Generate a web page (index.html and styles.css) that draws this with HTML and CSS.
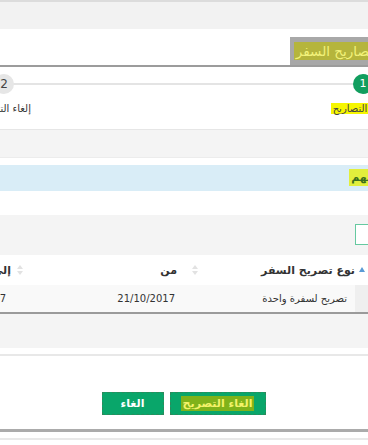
FILE: index.html
```html
<!DOCTYPE html>
<html lang="ar" dir="rtl">
<head>
  <meta charset="UTF-8" />
  <meta name="viewport" content="width=device-width, initial-scale=1.0"/>
  <title>إلغاء تصاريح السفر</title>
  <link rel="stylesheet" href="styles.css">
</head>
<body>

  <div class="page">
    <div class="topbar"></div>

    <div class="heading">
      <h1 class="heading-title"><mark class="hl-dark">إلغاء تصاريح السفر</mark></h1>
    </div>

    <div class="steps">
      <div class="step active">
        <span class="step-num">1</span>
        <span class="step-label"><mark class="hl-bright">اختيار التصاريح</mark></span>
      </div>
      <div class="step">
        <span class="step-num">2</span>
        <span class="step-label">إلغاء التصريح</span>
      </div>
    </div>

    <div class="band"></div>

    <div class="notice"><mark class="hl-notice">تنبيه مهم</mark></div>

    <div class="filter">
      <input class="filter-input" type="text" />
    </div>

    <table class="grid">
      <colgroup>
        <col class="w-a">
        <col class="w-b">
        <col class="w-c">
        <col>
      </colgroup>
      <thead>
        <tr>
          <th class="col-a"><span class="sort-up"></span></th>
          <th class="col-b">نوع تصريح السفر</th>
          <th class="col-c">
            <svg class="sort" width="6" height="10" viewBox="0 0 6 10"><path d="M3 0 6 4H0zM3 10 0 6h6z" fill="#e2e2e2"/></svg>من
          </th>
          <th class="col-d">
            <svg class="sort" width="6" height="10" viewBox="0 0 6 10"><path d="M3 0 6 4H0zM3 10 0 6h6z" fill="#e2e2e2"/></svg>إلى
          </th>
        </tr>
      </thead>
      <tbody>
        <tr>
          <td class="col-a"></td>
          <td class="col-b">تصريح لسفرة واحدة</td>
          <td class="col-c">21/10/2017</td>
          <td class="col-d">21/11/2017</td>
        </tr>
      </tbody>
    </table>

    <div class="band band-low"></div>

    <div class="actions">
      <button class="btn" type="button"><mark class="hl-btn">الغاء التصريح</mark></button>
      <button class="btn btn-small" type="button">الغاء</button>
    </div>

    <div class="bottom-line"></div>
  </div>

</body>
</html>
```

FILE: styles.css
```css
* {
  margin: 0;
  padding: 0;
  box-sizing: border-box;
}

html, body {
  height: 100%;
  overflow: hidden;
  background: #fff;
  font-family: Tahoma, "DejaVu Sans", sans-serif;
  font-size: 11px;
  color: #333;
}

/* the screenshot is a crop of a wider page */
.page {
  margin: 0 -40px 0 -41px;
}

.topbar {
  height: 29px;
  background: #f2f2f2;
  border-top: 2px solid #dcdcdc;
}

.heading {
  padding-top: 8px;
  border-bottom: 2px solid #9c9c9c;
}

.heading-title {
  display: inline-block;
  height: 28px;
  padding: 4px 4px 0;
  background: #a8a8a8;
  font-size: 13.5px;
  font-weight: normal;
  line-height: 20px;
}

mark {
  color: inherit;
  background: none;
}

.hl-dark {
  background: #b5b53c;
  color: #f2f27a;
  padding: 1px 2px;
}

.steps {
  display: flex;
  justify-content: space-between;
  height: 63px;
  padding-top: 7px;
  border-bottom: 1px solid #e6e6e6;
  background: linear-gradient(#e4e4e4, #e4e4e4) no-repeat 0 16px / 100% 2px;
}

.step {
  width: 90px;
  display: flex;
  flex-direction: column;
  align-items: center;
}

.step-num {
  width: 20px;
  height: 20px;
  border-radius: 50%;
  background: #e6e6e6;
  color: #444;
  font-size: 12px;
  line-height: 20px;
  text-align: center;
}

.step.active .step-num {
  background: #129e5f;
  color: #fff;
  font-size: 11px;
}

.step-label {
  margin-top: 8px;
  font-size: 10px;
  line-height: 13px;
  white-space: nowrap;
}

.hl-bright {
  background: #f6f600;
  color: #444;
  padding: 0 2px;
}

.band {
  height: 28px;
  background: #f4f4f4;
  border-bottom: 1px solid #ececec;
}

.notice {
  margin: 7px 0 24px;
  height: 26px;
  padding-right: 4px;
  background: #d9edf7;
  font-weight: bold;
  line-height: 26px;
}

.hl-notice {
  background: #e2ef3c;
  color: #3b6e1c;
  padding: 2px 2px;
}

.filter {
  height: 40px;
  padding: 9px 13px 0;
  background: #f4f4f4;
}

.filter-input {
  display: block;
  width: 40px;
  height: 21px;
  border: 1px solid #66c9a0;
  background: #fff;
}

.grid {
  width: 100%;
  table-layout: fixed;
  border-collapse: collapse;
  border-bottom: 2px solid #9a9a9a;
}

.w-a { width: 53px; }
.w-b { width: 150px; }
.w-c { width: 175px; }

.grid th,
.grid td {
  text-align: right;
  white-space: nowrap;
  overflow: hidden;
}

.grid th {
  height: 30px;
  font-size: 11px;
  font-weight: bold;
  color: #333;
  background: #fff;
}

.grid td {
  height: 28px;
  background: #f9f9f9;
  font-size: 10px;
}

.grid .col-a {
  text-align: left;
  padding-left: 4px;
}

.grid td.col-a {
  background: #efefef;
}

.grid td.col-b {
  padding-right: 8px;
}

.grid th.col-c,
.grid th.col-d {
  padding-right: 7px;
}

.grid td.col-c {
  padding-right: 30px;
}

.grid td.col-d {
  padding-right: 24px;
}

.sort-up {
  display: inline-block;
  width: 0;
  height: 0;
  border-left: 3px solid transparent;
  border-right: 3px solid transparent;
  border-bottom: 5px solid #5a9bd5;
  vertical-align: 2px;
}

.sort {
  margin-left: 15px;
  vertical-align: -1px;
}

.grid th.col-d .sort {
  margin-left: 6px;
}

.band-low {
  height: 34px;
  border-bottom: none;
}

.actions {
  margin-top: 6px;
  padding: 36px 0 14px;
  display: flex;
  justify-content: center;
  gap: 6px;
  border-top: 2px solid #e8e8e8;
  border-bottom: 3px solid #ababab;
}

.btn {
  width: 96px;
  height: 23px;
  background: #09a66a;
  border: 1px dashed #2c8a5c;
  color: #fff;
  font-family: inherit;
  font-size: 11px;
  font-weight: bold;
}

.btn-small {
  width: 62px;
}

.hl-btn {
  background: #7fb21a;
  color: #f3f36a;
  padding: 1px 2px;
}

.bottom-line {
  margin-top: 6px;
  border-top: 2px solid #e9e9e9;
}
```
